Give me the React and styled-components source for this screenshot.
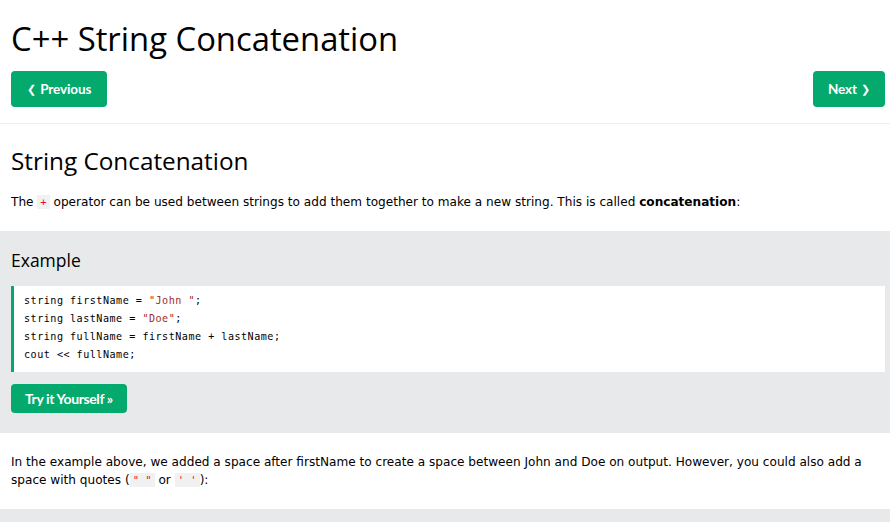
import styled, { createGlobalStyle } from "styled-components";

const GlobalStyle = createGlobalStyle`
    body {
        margin: 0;
        background: #fff;
        color: #000;
        font-family: "DejaVu Sans", Verdana, sans-serif;
        font-size: 12.1px;
    }
`;

const Main = styled.main`
    width: 890px;
    overflow: hidden;
`;

const Section = styled.section`
    padding: 0 5px 0 11px;
`;

const Title = styled.h1`
    margin: 0;
    padding-top: 16px;
    font-family: "Open Sans", "Noto Sans", sans-serif;
    font-weight: 400;
    font-size: 32.8px;
    line-height: 46px;
`;

const Nav = styled.div`
    display: flex;
    justify-content: space-between;
    margin-top: 9px;
`;

const NavButton = styled.a`
    display: inline-flex;
    align-items: center;
    gap: 4px;
    height: 36px;
    padding: 0 ${(p) => (p.$next ? 15 : 16)}px;
    box-sizing: border-box;
    background: #04aa6d;
    color: #fff;
    border-radius: 4px;
    font-family: "Lato", sans-serif;
    font-weight: 700;
    font-size: 13.5px;
    letter-spacing: -0.1px;
    text-decoration: none;
    span {
        font-family: "DejaVu Sans", sans-serif;
        font-size: 11px;
    }
`;

const Rule = styled.hr`
    border: 0;
    border-top: 1px solid #eeeeee;
    margin: 16px 0 0;
`;

const Heading = styled.h2`
    margin: 20px 0 0;
    font-family: "Open Sans", "Noto Sans", sans-serif;
    font-weight: 400;
    font-size: 24.3px;
    line-height: 34px;
`;

const Text = styled.p`
    margin: ${(p) => p.$top || 15}px 0 0;
    line-height: 18px;
    padding-right: 20px;
`;

const InlineCode = styled.code`
    font-family: "DejaVu Sans Mono", Consolas, monospace;
    font-size: 10.5px;
    color: crimson;
    background: #f1f1f1;
    padding: 1px 3px;
`;

const ExampleBox = styled.div`
    background: #e7e9eb;
    margin-top: ${(p) => p.$top}px;
    padding: ${(p) => (p.$empty ? "0" : "16px 5px 20px 11px")};
    height: ${(p) => (p.$empty ? "40px" : "auto")};
`;

const ExampleTitle = styled.h3`
    margin: 0;
    font-family: "Open Sans", "Noto Sans", sans-serif;
    font-weight: 400;
    font-size: 17.5px;
    line-height: 26px;
`;

const CodeBlock = styled.pre`
    margin: 13px 0 0;
    background: #fff;
    border-left: 3px solid #04aa6d;
    padding: 6px 10px 8px;
    font-family: "DejaVu Sans Mono", Consolas, monospace;
    font-size: 10.1px;
    letter-spacing: 0.5px;
    line-height: 18px;
    color: #000;
`;

const Str = styled.span`
    color: #a52a2a;
`;

const TryButton = styled.a`
    display: inline-flex;
    align-items: center;
    margin-top: 12px;
    height: 29px;
    padding: 0 14px;
    box-sizing: border-box;
    background: #04aa6d;
    color: #fff;
    border-radius: 4px;
    font-family: "Lato", sans-serif;
    font-weight: 700;
    font-size: 14px;
    letter-spacing: -0.4px;
    text-decoration: none;
`;

const App = () => {
    return (
        <Main>
            <GlobalStyle />
            <Section>
                <Title>C++ String Concatenation</Title>
                <Nav>
                    <NavButton href="#">
                        <span>❮</span> Previous
                    </NavButton>
                    <NavButton href="#" $next>
                        Next <span>❯</span>
                    </NavButton>
                </Nav>
            </Section>
            <Rule />
            <Section>
                <Heading>String Concatenation</Heading>
                <Text>
                    The <InlineCode>+</InlineCode> operator can be used between strings to add them
                    together to make a new string. This is called <b>concatenation</b>:
                </Text>
            </Section>
            <ExampleBox $top={20}>
                <ExampleTitle>Example</ExampleTitle>
                <CodeBlock>
                    string firstName = <Str>"John "</Str>;{"\n"}
                    string lastName = <Str>"Doe"</Str>;{"\n"}
                    string fullName = firstName + lastName;{"\n"}
                    cout &lt;&lt; fullName;
                </CodeBlock>
                <TryButton href="#">Try it Yourself »</TryButton>
            </ExampleBox>
            <Section>
                <Text $top={20}>
                    In the example above, we added a space after firstName to create a space between
                    John and Doe on output. However, you could also add a space with quotes (
                    <InlineCode>" "</InlineCode> or <InlineCode>' '</InlineCode>):
                </Text>
            </Section>
            <ExampleBox $top={20} $empty />
        </Main>
    );
};

export default App;
